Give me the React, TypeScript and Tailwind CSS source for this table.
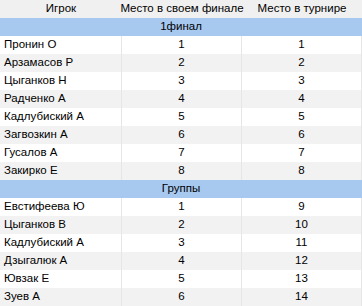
import React from 'react';

type Row = { name: string; place: number; total: number };

const finals: Row[] = [
  { name: 'Пронин О', place: 1, total: 1 },
  { name: 'Арзамасов Р', place: 2, total: 2 },
  { name: 'Цыганков Н', place: 3, total: 3 },
  { name: 'Радченко А', place: 4, total: 4 },
  { name: 'Кадлубиский А', place: 5, total: 5 },
  { name: 'Загвозкин А', place: 6, total: 6 },
  { name: 'Гусалов А', place: 7, total: 7 },
  { name: 'Закирко Е', place: 8, total: 8 },
];

const groups: Row[] = [
  { name: 'Евстифеева Ю', place: 1, total: 9 },
  { name: 'Цыганков В', place: 2, total: 10 },
  { name: 'Кадлубиский А', place: 3, total: 11 },
  { name: 'Дзыгалюк А', place: 4, total: 12 },
  { name: 'Ювзак Е', place: 5, total: 13 },
  { name: 'Зуев А', place: 6, total: 14 },
];

function Section({ title, rows }: { title: string; rows: Row[] }) {
  return (
    <>
      <div className="h-[18px] bg-[#a7c9f0] flex items-center justify-center">{title}</div>
      {rows.map((r, i) => (
        <div key={r.name + i} className={`grid grid-cols-[122px_120px_120px] h-[18px] ${i % 2 ? 'bg-[#f2f2f2]' : 'bg-white'}`}>
          <div className="pl-[4px] flex items-center border-r border-[#e6e6e6]">{r.name}</div>
          <div className="flex items-center justify-center border-r border-[#e6e6e6]">{r.place}</div>
          <div className="flex items-center justify-center border-r border-[#e6e6e6]">{r.total}</div>
        </div>
      ))}
    </>
  );
}

export default function App() {
  return (
    <div className="w-[362px] h-[306px] overflow-hidden bg-white text-black text-[11.5px] leading-none whitespace-nowrap font-['Liberation_Sans',sans-serif]">
      <div className="grid grid-cols-[122px_120px_120px] h-[18px] bg-[#f0f0f0]">
        <div className="flex items-center justify-center">Игрок</div>
        <div className="flex items-center justify-center">Место в своем финале</div>
        <div className="flex items-center justify-center">Место в турнире</div>
      </div>
      <Section title="1финал" rows={finals} />
      <Section title="Группы" rows={groups} />
    </div>
  );
}
